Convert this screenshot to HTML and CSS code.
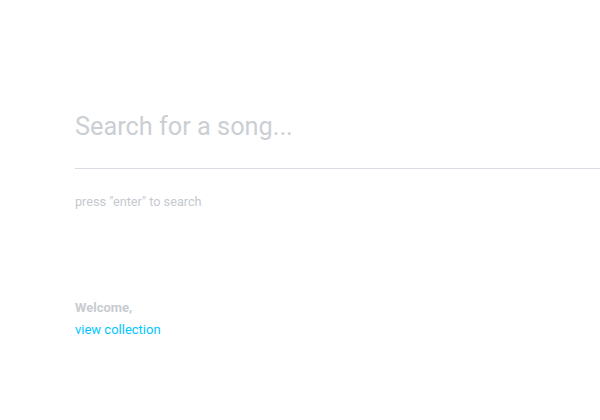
FILE: index.html
```html
<!DOCTYPE html>
<html>
<head>
<meta charset="utf-8">
<link rel="stylesheet" href="styles.css">
</head>
<body>
<main class="page">
  <section class="search">
    <input class="search-input" type="text" placeholder="Search for a song...">
    <p class="hint">press "enter" to search</p>
  </section>
  <section class="welcome">
    <p class="welcome-title">Welcome,</p>
    <a class="welcome-link" href="#">view collection</a>
  </section>
</main>
</body>
</html>
```
FILE: styles.css
```css
html, body {
  margin: 0;
  padding: 0;
  background: #ffffff;
  font-family: Roboto, "Liberation Sans", sans-serif;
}
.page {
  padding: 108px 0 0 75px;
}
.search {
  display: flex;
  flex-direction: column;
}
.search-input {
  border: none;
  border-bottom: 1px solid #d6dce1;
  outline: none;
  padding: 0 0 24px 0;
  margin: 0;
  height: 61px;
  box-sizing: border-box;
  font-family: Roboto, "Liberation Sans", sans-serif;
  font-size: 25.3px;
  color: #333;
  background: transparent;
}
.search-input::placeholder {
  color: #cbcfd4;
}
.hint {
  margin: 25px 0 0 0;
  font-size: 12.7px;
  color: #c5c9cf;
  line-height: 16px;
}
.welcome {
  margin-top: 87px;
  display: flex;
  flex-direction: column;
  font-size: 13px;
  line-height: 22px;
}
.welcome-title {
  margin: 0;
  font-weight: bold;
  color: #c8ccd2;
}
.welcome-link {
  color: #00c6ff;
  text-decoration: none;
}
```
